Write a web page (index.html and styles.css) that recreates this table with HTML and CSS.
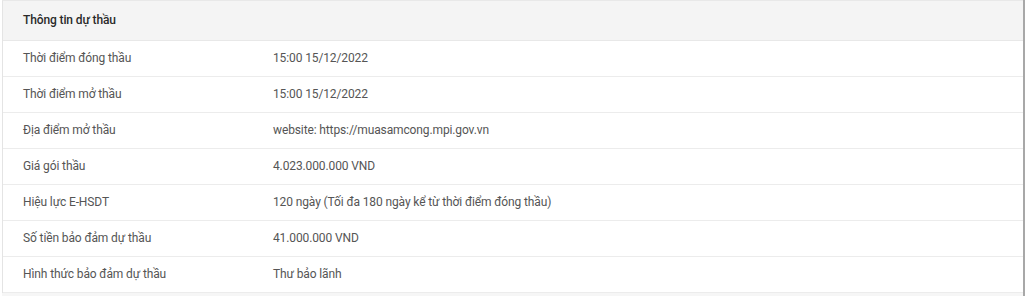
FILE: index.html
```html
<!DOCTYPE html>
<html lang="vi">
<head>
<meta charset="utf-8">
<title>Thông tin dự thầu</title>
<link rel="stylesheet" href="styles.css">
</head>
<body>
<div class="page">
  <div class="panel">
    <div class="panel-head">Thông tin dự thầu</div>
    <div class="row"><div class="label">Thời điểm đóng thầu</div><div class="value">15:00 15/12/2022</div></div>
    <div class="row"><div class="label">Thời điểm mở thầu</div><div class="value">15:00 15/12/2022</div></div>
    <div class="row"><div class="label">Địa điểm mở thầu</div><div class="value">website: https://muasamcong.mpi.gov.vn</div></div>
    <div class="row"><div class="label">Giá gói thầu</div><div class="value">4.023.000.000 VND</div></div>
    <div class="row"><div class="label">Hiệu lực E-HSDT</div><div class="value">120 ngày (Tối đa 180 ngày kể từ thời điểm đóng thầu)</div></div>
    <div class="row"><div class="label">Số tiền bảo đảm dự thầu</div><div class="value">41.000.000 VND</div></div>
    <div class="row"><div class="label">Hình thức bảo đảm dự thầu</div><div class="value">Thư bảo lãnh</div></div>
  </div>
  <div class="below"></div>
</div>
</body>
</html>
```

FILE: styles.css
```css
html, body {
  margin: 0;
  padding: 0;
  background: #ffffff;
}
body {
  font-family: Roboto, "Noto Sans", Arial, sans-serif;
  font-size: 12px;
  letter-spacing: -0.12px;
  color: #555555;
}
.page {
  width: 1025px;
  height: 296px;
  overflow: hidden;
  box-sizing: border-box;
  border-right: 2px solid #a8a8a8;
}
.panel {
  margin-left: 2px;
  border-left: 1px solid #e4e4e4;
  border-top: 1px solid #e8e8e8;
}
.panel-head {
  height: 40px;
  box-sizing: border-box;
  background: #f4f4f4;
  border-bottom: 1px solid #e8e8e8;
  padding-left: 20px;
  padding-bottom: 2px;
  display: flex;
  align-items: center;
  font-weight: 500;
  color: #2a2a2a;
}
.row {
  display: flex;
  align-items: center;
  height: 36px;
  box-sizing: border-box;
  padding-bottom: 2px;
  border-bottom: 1px solid #ececec;
}
.label {
  width: 250px;
  padding-left: 20px;
  flex: none;
}
.value {
  flex: 1;
}
.below {
  height: 10px;
  margin-left: 2px;
  background: #f6f6f6;
}
```
